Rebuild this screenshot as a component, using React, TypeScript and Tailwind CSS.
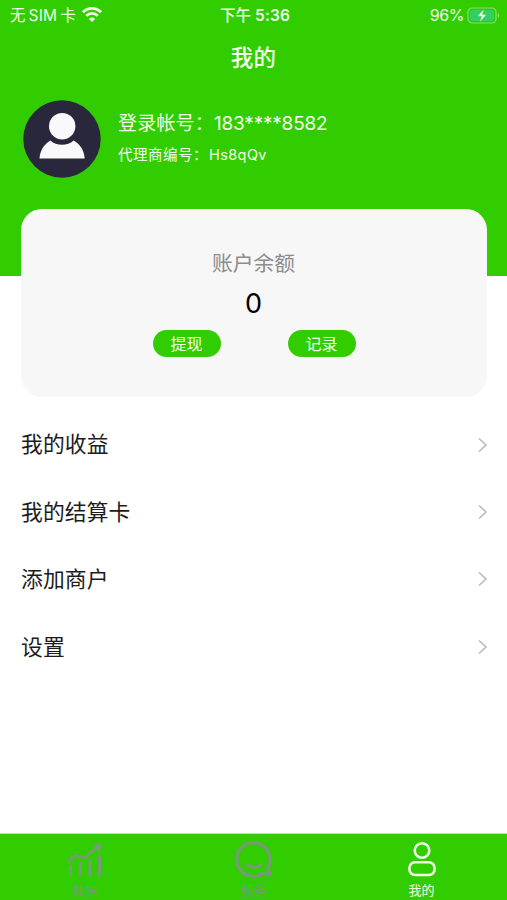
const menu = ['我的收益', '我的结算卡', '添加商户', '设置'];

function StatusBar() {
  return (
    <div className="grid h-[31px] grid-cols-3 items-center pl-[10px] pr-[7px] text-[15.5px] leading-none text-[#effbe5]">
      <div className="flex items-center gap-[6px] whitespace-nowrap">
        <span className="flex gap-[3px]">
          <span>无</span>
          <span className="tracking-[0.2px]">SIM</span>
          <span>卡</span>
        </span>
        <svg width="20" height="16" viewBox="0 0 20 16" className="-mt-[1px]" fill="none" stroke="currentColor" strokeWidth="2.8">
          <path d="M.9 5.2C6-.1 14-.1 19.1 5.2" />
          <path d="M4.2 8.8c3.3-3.3 8.3-3.3 11.6 0" />
          <path d="M6.9 11.9c1.8-1.8 4.4-1.8 6.2 0L10 15z" fill="currentColor" stroke="none" />
        </svg>
      </div>
      <div className="flex justify-center gap-[4px] whitespace-nowrap font-medium">
        <span>下午</span>
        <span className="font-semibold tracking-[0.1px]">5:36</span>
      </div>
      <div className="-mt-[1px] flex items-center justify-end gap-[3px]">
        <span className="text-[16px] tracking-[-0.4px]">96%</span>
        <svg width="33" height="17" viewBox="0 0 33 17">
          <rect x="1" y="1" width="28" height="15" rx="4.2" fill="none" stroke="#86df62" strokeWidth="1.2" />
          <rect x="3" y="3" width="24" height="11" rx="2.4" fill="#30cf6a" />
          <path d="M30.8 6v5c2-.9 2-4.1 0-5z" fill="#86df62" />
          <path d="M17.2 1.8 10.5 9.2h3.9l-1.7 6 6.9-7.6h-4.1z" fill="#fff" stroke="#32cd10" strokeWidth=".5" />
        </svg>
      </div>
    </div>
  );
}

function Avatar() {
  return (
    <svg width="78" height="78" viewBox="0 0 78 78">
      <circle cx="39" cy="39" r="38.7" fill="#29273b" />
      <circle cx="39.2" cy="26.2" r="13.2" fill="#f9f9fb" />
      <path d="M16.5 58.5c.6-8.2 4.5-14.5 10.9-18.1 6 5.8 17.2 5.8 23.2 0 6.7 3.6 10.5 9.9 11.1 18.1z" fill="#f9f9fb" />
    </svg>
  );
}

export default function App() {
  return (
    <div className="flex h-[900px] w-[507px] flex-col overflow-hidden bg-white font-['Inter','Noto_Sans_CJK_SC',sans-serif]">
      <header className="h-[276px] shrink-0 bg-[#32cd00] text-[#f2fce9]">
        <StatusBar />
        <h1 className="flex h-[54px] items-center justify-center text-[22.5px] font-medium tracking-[0.3px]">我的</h1>
        <div className="flex items-center gap-[17px] pl-[23px] pt-[15px]">
          <Avatar />
          <div className="flex flex-col gap-[4px]">
            <div className="flex whitespace-nowrap text-[19px] leading-[28px]">
              <span className="w-[96px] tracking-[0.2px]">登录帐号：</span>
              <span className="tracking-[-0.2px]">183****8582</span>
            </div>
            <div className="flex whitespace-nowrap text-[14.5px] leading-[26px]">
              <span className="w-[91px] tracking-[0.5px]">代理商编号：</span>
              <span className="tracking-[0.4px]">Hs8qQv</span>
            </div>
          </div>
        </div>
      </header>

      <section className="relative mx-auto -mt-[67px] flex h-[188px] w-[466px] shrink-0 flex-col items-center rounded-[21px] bg-[#f7f7f7] pt-[39px]">
        <div className="text-[20.8px] leading-[32px] text-[#8c8c8c]">账户余额</div>
        <div className="mt-[6px] text-[27px] leading-[36px] text-black">0</div>
        <div className="mt-[8px] flex gap-[67px] pl-[1px]">
          <button className="h-[27px] w-[68px] rounded-full bg-[#32cd00] pt-[1px] text-[16px] leading-[26px] text-[#f2fce9]">提现</button>
          <button className="h-[27px] w-[68px] rounded-full bg-[#32cd00] pt-[1px] text-[16px] leading-[26px] text-[#f2fce9]">记录</button>
        </div>
      </section>

      <main className="mt-[14px] flex-1">
        {menu.map((item) => (
          <div key={item} className="flex h-[67.4px] items-center justify-between pl-[21px] pr-[19px] text-[21.8px] tracking-[0.1px] text-[#1c1c1c]">
            <span>{item}</span>
            <svg width="10" height="16" viewBox="0 0 10 16" fill="none" stroke="#bcbcbc" strokeWidth="1.7">
              <path d="m1 1.5 7 6.5-7 6.5" />
            </svg>
          </div>
        ))}
      </main>

      <nav className="grid h-[67px] shrink-0 grid-cols-3 border-t border-[#b4ebA0] bg-[#32cd00] text-[13px] leading-[18px] text-[#77997c]">
        <div className="flex flex-col items-center pt-[8px]">
          <svg width="36" height="36" viewBox="0 0 36 36" fill="none" stroke="currentColor">
            <path d="M1.5 20.5C8 10 11.5 14.5 15 15.5c5.5 1 7-5 17-12" strokeWidth="2.7" />
            <path d="m25.5 3.4 9-2.2-1.7 9z" fill="currentColor" stroke="none" />
            <path d="M3.5 23v11M13.2 19v15M23 18v16M32.5 13v21" strokeWidth="3" />
          </svg>
          <span className="mt-[3px]">数据</span>
        </div>
        <div className="flex flex-col items-center pt-[6px]">
          <svg width="38" height="38" viewBox="0 0 38 38" fill="none" stroke="currentColor" strokeWidth="3.2">
            <path d="M32.5 28.5A16.7 16.7 0 1 0 27.5 33.5l8 1.5z" strokeLinejoin="round" />
            <path d="M12.5 25.2c3.5 2.4 9.5 2.4 13 0" strokeLinecap="round" />
          </svg>
          <span className="mt-[3px]">服务</span>
        </div>
        <div className="flex flex-col items-center pr-[2px] pt-[7px] text-[#f0ffe5]">
          <svg width="28" height="36" viewBox="0 0 28 36" fill="none" stroke="currentColor" strokeWidth="2.6">
            <circle cx="14" cy="9.5" r="7.3" />
            <rect x="1.4" y="21.2" width="25.2" height="12.8" rx="5.8" />
          </svg>
          <span className="mt-[4px]">我的</span>
        </div>
      </nav>
    </div>
  );
}
